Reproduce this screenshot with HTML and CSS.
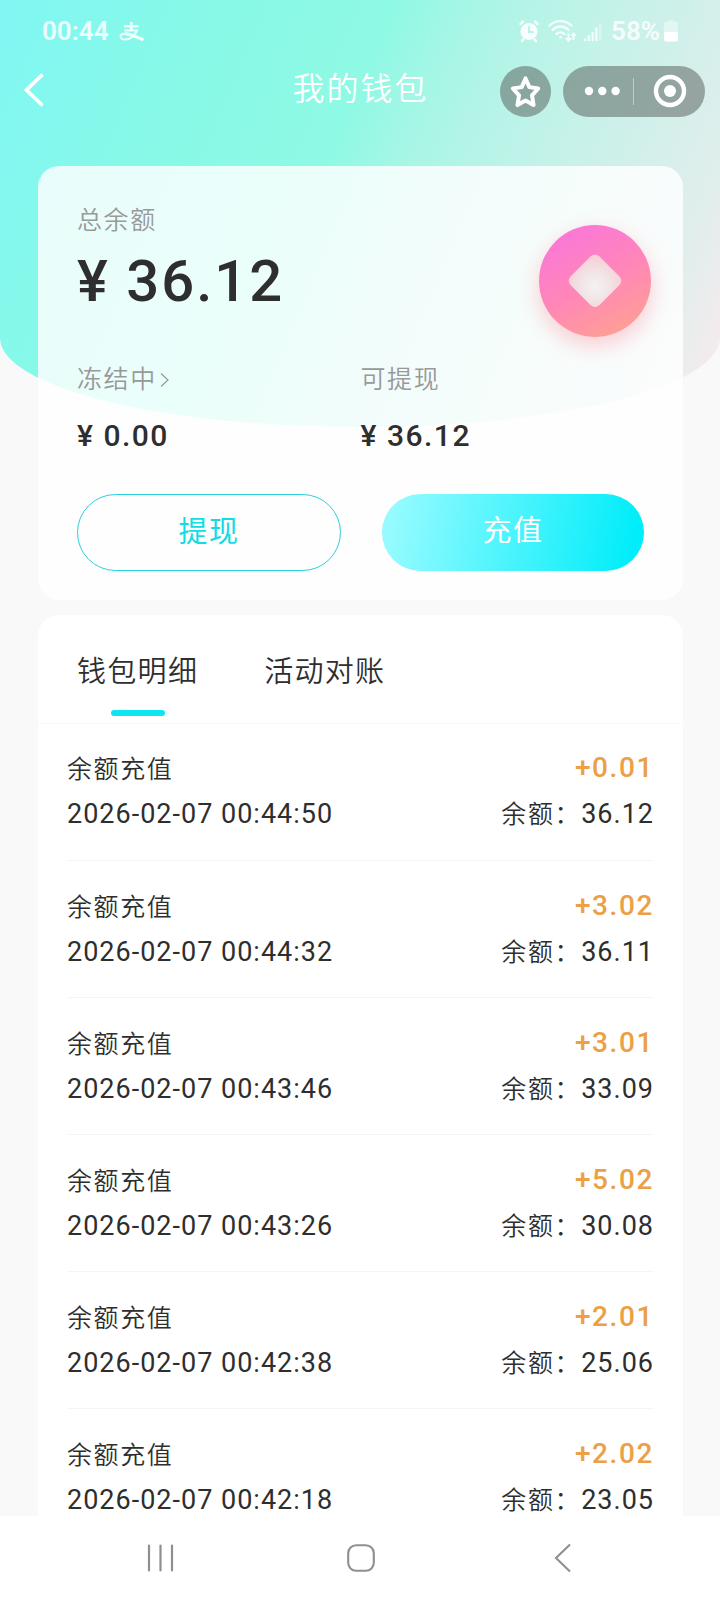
FILE: index.html
```html
<!DOCTYPE html>
<html lang="zh-CN">
<head>
<meta charset="utf-8">
<title>我的钱包</title>
<link rel="stylesheet" href="styles.css">
</head>
<body>
<div class="screen">
  <div class="backdrop"></div>

  <header class="status">
    <span class="status-time">00:44</span>
    <svg class="status-pay" width="26" height="20" viewBox="0 0 26 20" fill="none" stroke="#fff" stroke-opacity=".85">
      <path d="M5 4.200h14.500M12.300 0v8.300" stroke-width="2.600"/>
      <path d="M5.500 8.600h12.500C16.500 12.500 12 17.500 6.500 17.600c-3.200 0-5-1.100-5-3s1.800-2.900 4.300-2.900" stroke-width="2"/>
      <path d="M5.800 11.700c5 0 10 3.200 18.700 6" stroke-width="3.200"/>
    </svg>
    <span class="grow"></span>
    <svg class="status-icons" width="84" height="24" viewBox="0 0 84 24" fill="none" stroke="#fff" stroke-opacity=".85">
      <g stroke-linecap="round">
        <circle cx="11" cy="12.500" r="8.500" fill="#fff" fill-opacity=".9" stroke="none"/>
        <path d="M2.500 5l2.500-2.500M19.500 5L17 2.500M5.500 20.500L4 22M16.500 20.500L18 22" stroke-width="2.500"/>
        <path d="M11 8v5h4" stroke="#b8f2e8" stroke-opacity="1" stroke-width="2"/>
        <path d="M31.500 6.500a16 16 0 0 1 22 0M34.500 11a11 11 0 0 1 16 0M38.500 15a6 6 0 0 1 8 0" stroke-width="2.400"/>
        <path d="M42.500 18.300h.1" stroke-width="2.600"/>
      </g>
      <path d="M49.500 14v5h-3l4 4 4-4h-3v-5zM54.500 21v-4h-2l3-4 3 4h-2v4z" fill="#fff" fill-opacity=".85" stroke="none"/>
      <path d="M67 22v-2.500M70.800 22v-6M74.600 22v-9M78.400 22V8.500" stroke-width="2.200"/>
      <path d="M82.300 22V5" stroke-width="2.600" stroke-opacity=".35"/>
    </svg>
    <span class="status-battery">58%</span>
    <svg class="battery" width="14" height="22" viewBox="0 0 14 22">
      <path d="M4 1.500Q4 0 7 0t3 1.500h1.500A2.500 2.500 0 0 1 14 4v8H0V4a2.500 2.500 0 0 1 2.500-2.500z" fill="#fff" fill-opacity=".42"/>
      <path d="M0 12h14v7.500a2 2 0 0 1-2 2H2a2 2 0 0 1-2-2z" fill="#fff"/>
    </svg>
  </header>

  <nav class="titlebar">
    <svg class="back" width="22" height="34" viewBox="0 0 22 34" fill="none" stroke="#fff" stroke-width="3.800"><path d="M19.500 1.500L3.500 17l16 15.500"/></svg>
    <h1 class="title">我的钱包</h1>
    <div class="actions">
      <div class="fav">
        <svg width="36" height="36" viewBox="0 0 34 34" fill="none" stroke="#fff" stroke-width="3.800" stroke-linejoin="round"><path d="M17.500 4.200l3.600 8.200 8.400 1.300-5.900 6.400 1.500 9.200-7.600-4.200-7.600 4.200 1.500-9.200-5.900-6.400 8.400-1.300z"/></svg>
      </div>
      <div class="capsule">
        <svg width="142" height="51" viewBox="0 0 142 51" fill="none">
          <g fill="#fff"><circle cx="26" cy="25" r="4.200"/><circle cx="39.300" cy="25" r="4.200"/><circle cx="52.600" cy="25" r="4.200"/><circle cx="107" cy="25" r="6"/></g>
          <path d="M70.500 12v27" stroke="#fff" stroke-opacity=".45"/>
          <circle cx="107" cy="25" r="14" stroke="#fff" stroke-width="4.400"/>
        </svg>
      </div>
    </div>
  </nav>

  <section class="card wallet">
    <div class="coin">
      <svg width="112" height="112" viewBox="0 0 112 112">
        <defs>
          <linearGradient id="coinFill" x1=".2" y1=".1" x2=".65" y2="1"><stop offset="0" stop-color="#fb78d6"/><stop offset=".5" stop-color="#ff86b8"/><stop offset="1" stop-color="#ff9e96"/></linearGradient>
          <radialGradient id="holeFill" cx=".5" cy=".6" r=".55"><stop offset="0" stop-color="#f5f2f2"/><stop offset=".45" stop-color="#f1e6e7"/><stop offset="1" stop-color="#f6cfd8"/></radialGradient>
        </defs>
        <circle cx="56" cy="56" r="56" fill="url(#coinFill)"/>
        <path d="M51.500 31.500Q56 27.500 60.500 31.500L80.500 51.500Q84 56 80.500 60L60.500 80Q56 84 51.500 80L31.500 60Q28 56 31.500 51.500Z" fill="url(#holeFill)"/>
      </svg>
    </div>
    <p class="label">总余额</p>
    <p class="total">¥ 36.12</p>
    <div class="split">
      <div class="part">
        <p class="label">冻结中<svg width="9" height="14" viewBox="0 0 9 14" fill="none" stroke="#999" stroke-width="1.200"><path d="M1 .500L8 7 1 13.500"/></svg></p>
        <p class="sum">¥ 0.00</p>
      </div>
      <div class="part">
        <p class="label">可提现</p>
        <p class="sum">¥ 36.12</p>
      </div>
    </div>
    <div class="buttons">
      <div class="btn btn-line">提现</div>
      <div class="btn btn-fill">充值</div>
    </div>
  </section>

  <section class="card ledger">
    <div class="tabs">
      <div class="tab tab-on">钱包明细</div>
      <div class="tab">活动对账</div>
    </div>
    <ul class="rows">
      <li class="row"><div class="line"><span>余额充值</span><span class="plus">+0.01</span></div><div class="line line-sub"><span class="num">2026-02-07 00:44:50</span><span>余额：<span class="num">36.12</span></span></div></li>
      <li class="row"><div class="line"><span>余额充值</span><span class="plus">+3.02</span></div><div class="line line-sub"><span class="num">2026-02-07 00:44:32</span><span>余额：<span class="num">36.11</span></span></div></li>
      <li class="row"><div class="line"><span>余额充值</span><span class="plus">+3.01</span></div><div class="line line-sub"><span class="num">2026-02-07 00:43:46</span><span>余额：<span class="num">33.09</span></span></div></li>
      <li class="row"><div class="line"><span>余额充值</span><span class="plus">+5.02</span></div><div class="line line-sub"><span class="num">2026-02-07 00:43:26</span><span>余额：<span class="num">30.08</span></span></div></li>
      <li class="row"><div class="line"><span>余额充值</span><span class="plus">+2.01</span></div><div class="line line-sub"><span class="num">2026-02-07 00:42:38</span><span>余额：<span class="num">25.06</span></span></div></li>
      <li class="row"><div class="line"><span>余额充值</span><span class="plus">+2.02</span></div><div class="line line-sub"><span class="num">2026-02-07 00:42:18</span><span>余额：<span class="num">23.05</span></span></div></li>
    </ul>
  </section>

  <footer class="sysnav">
    <svg width="28" height="28" viewBox="0 0 28 28" fill="none" stroke="#8f8f8f" stroke-width="2.200" stroke-linecap="round"><path d="M2 1.500v25M13.500 1.500v25M25 1.500v25"/></svg>
    <svg class="home" width="28" height="28" viewBox="0 0 28 28" fill="none" stroke="#8f8f8f" stroke-width="2.100"><rect x="1.200" y="1.200" width="25.600" height="25.600" rx="8"/></svg>
    <svg width="18" height="30" viewBox="0 0 18 30" fill="none" stroke="#8f8f8f" stroke-width="2.100"><path d="M16 1.500L2 15l14 13.500"/></svg>
  </footer>
</div>
</body>
</html>
```
FILE: styles.css
```css
* { box-sizing: border-box; }
body, h1, p, ul { margin: 0; padding: 0; }
body { background: #f9f9f9; }

.screen {
  position: relative;
  display: flex;
  flex-direction: column;
  width: 720px;
  height: 1600px;
  overflow: hidden;
  font-family: Roboto, "Noto Sans CJK SC", sans-serif;
  color: #2e2e2e;
}
.screen > * { position: relative; }
.screen > .backdrop {
  position: absolute;
  top: 0;
  left: 0;
  width: 720px;
  height: 427px;
  border-radius: 0 0 50% 50% / 0 0 89px 89px;
  background: linear-gradient(113deg, #80f7f4 0%, #84f8ed 12%, #88f9e6 26%, #8ff9e4 44%, #a6f6e5 52%, #bcf3e8 63%, #d0f0ea 77%, #e1eeec 88%, #f8eaee 98%);
}

.status {
  display: flex;
  align-items: center;
  height: 62px;
  padding: 0 42px;
  color: rgba(255, 255, 255, .86);
  font-size: 26px;
  font-weight: 600;
  line-height: 62px;
}
.status-pay { margin: 1px 0 0 10px; }
.grow { flex: 1; }
.status-icons { margin-right: 9px; }
.battery { margin-left: 4px; }

.titlebar {
  display: flex;
  justify-content: space-between;
  height: 104px;
  padding: 4px 15px 0 23px;
}
.back { margin-top: 7px; }
.title {
  margin: 0 0 0 176px;
  color: #fff;
  font-size: 32px;
  font-weight: 350;
  letter-spacing: 2px;
  line-height: 46px;
}
.actions { display: flex; gap: 12px; }
.fav, .capsule {
  display: flex;
  align-items: center;
  justify-content: center;
  height: 51px;
  background: rgba(90, 98, 94, .53);
}
.fav { width: 51px; border-radius: 50%; }
.capsule { width: 142px; border-radius: 26px; }

.card { width: 645px; margin-left: 38px; border-radius: 21px; }
.wallet {
  flex: none;
  height: 434px;
  padding: 37px 39px 0 39px;
  background: rgba(255, 255, 255, .82);
}
.coin {
  position: absolute;
  top: 58.5px;
  right: 32.5px;
  width: 112px;
  height: 112px;
  border-radius: 50%;
  box-shadow: 0 8px 22px rgba(255, 130, 145, .4);
}
.coin svg { display: block; }
.label {
  display: flex;
  align-items: center;
  color: #999;
  font-size: 25px;
  font-weight: 350;
  letter-spacing: 1.600px;
  line-height: 36px;
}
.label svg { margin-left: 3px; }
.total {
  margin-top: 8px;
  font-size: 58px;
  font-weight: 500;
  letter-spacing: 2px;
  line-height: 68px;
}
.split { display: flex; margin-top: 47px; }
.part { width: 283.5px; }
.sum {
  margin-top: 20px;
  font-size: 30px;
  font-weight: 500;
  letter-spacing: 1.500px;
  line-height: 36px;
}
.buttons { display: flex; gap: 41px; margin-top: 40px; }
.btn {
  width: 264px;
  height: 77px;
  border-radius: 39px;
  font-size: 29px;
  font-weight: 400;
  letter-spacing: 1.500px;
  line-height: 75px;
  text-align: center;
}
.btn-line { border: 1px solid #2cd0dc; color: #13dbe3; }
.btn-fill { width: 262px; background: linear-gradient(100deg, #95fbff 5%, #00edfa 95%); color: #fff; }

.ledger {
  flex: 1;
  min-height: 0;
  margin-top: 15px;
  border-radius: 21px 21px 0 0;
  background: #fff;
  overflow: hidden;
}
.tabs {
  display: flex;
  gap: 66px;
  height: 109px;
  padding: 36px 39px 0;
  border-bottom: 1px solid #f9f9f9;
}
.tab {
  position: relative;
  font-size: 29px;
  font-weight: 350;
  letter-spacing: 1.300px;
  line-height: 43px;
}
.tab-on::after {
  content: "";
  position: absolute;
  left: 34px;
  top: 59px;
  width: 54px;
  height: 6px;
  border-radius: 3px;
  background: #0ee5f2;
}
.rows { padding: 0 29px; list-style: none; }
.row { height: 137px; padding-top: 28px; border-bottom: 1px solid #f5f5f5; }
.row + .row { padding-top: 29px; }
.line {
  display: flex;
  justify-content: space-between;
  height: 36px;
  font-size: 25px;
  font-weight: 350;
  letter-spacing: 1.600px;
  line-height: 36px;
}
.line-sub { margin-top: 8px; }
.num { font-size: 27px; font-weight: 400; letter-spacing: 1px; }
.plus { margin-top: -2px; color: #eba045; font-size: 28px; font-weight: 500; letter-spacing: 1.600px; }

.sysnav {
  display: flex;
  align-items: center;
  justify-content: space-between;
  flex: none;
  height: 84px;
  padding: 0 148px 0 147px;
  background: #fff;
}
.home { margin-right: 8px; }
```
